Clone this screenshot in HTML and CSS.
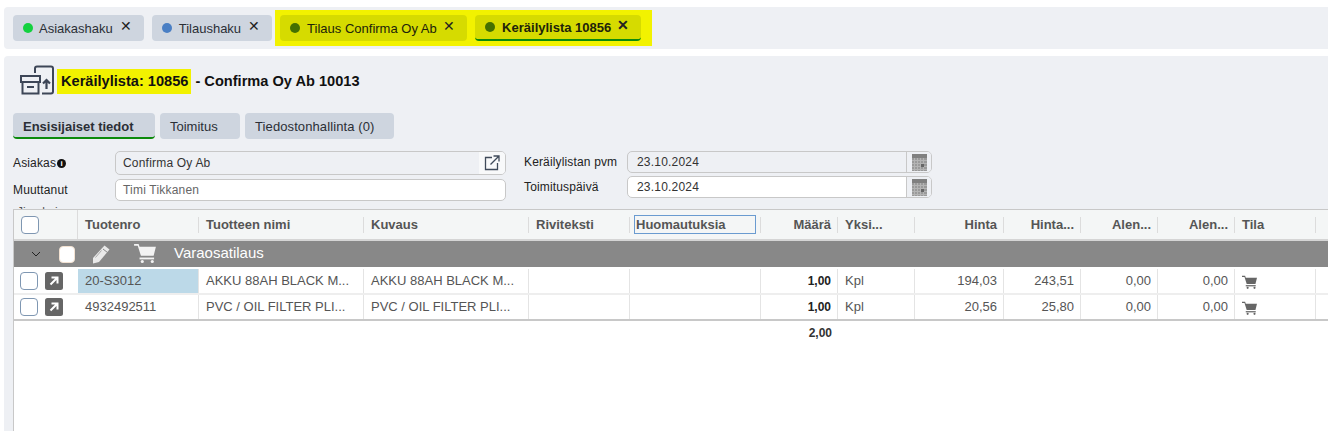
FILE: index.html
```html
<!DOCTYPE html>
<html lang="fi">
<head>
  <meta charset="UTF-8">
  <meta name="viewport" content="width=device-width, initial-scale=1">
  <title>Keräilylista 10856</title>
  <link rel="stylesheet" href="styles.css">
</head>
<body>
  <svg class="sprite" width="0" height="0">
    <symbol id="cart" viewBox="0 0 24 22">
      <path d="M0 1h5l1 3h18l-2.500 10H7.500L4 3H0z" fill="currentColor"/>
      <path d="M6 16h16v2H6z" fill="currentColor"/>
      <circle cx="9" cy="20.300" r="1.700" fill="currentColor"/>
      <circle cx="20" cy="20.300" r="1.700" fill="currentColor"/>
    </symbol>
    <symbol id="calendar" viewBox="0 0 15 17">
      <rect width="15" height="17" fill="#9a9a9a"/>
      <rect width="15" height="4" fill="#808080"/>
      <path d="M2.500 4v13M5.500 4v13M8.500 4v13M11.500 4v13M0 6.500h15M0 9.500h15M0 12.500h15M0 15.500h15" stroke="#b4b4b4" stroke-width="1"/>
      <rect x="9" y="10" width="3" height="3" fill="#666"/>
    </symbol>
    <symbol id="open" viewBox="0 0 18 18">
      <rect x="0" y="0" width="18" height="18" rx="2.500" fill="#666"/>
      <path d="M5.500 12.500l6.500-6.500M6.500 5.500h6v6" fill="none" stroke="#fff" stroke-width="2"/>
    </symbol>
  </svg>

  <div class="tabbar">
    <div class="tab"><span class="dot dot-green"></span>Asiakashaku<span class="close">✕</span></div>
    <div class="tab"><span class="dot dot-blue"></span>Tilaushaku<span class="close">✕</span></div>
    <div class="mark-tabs">
      <div class="tab tab-marked"><span class="dot dot-olive"></span><span class="tab-clip">Tilaus Confirma Oy Ab</span><span class="close">✕</span></div>
      <div class="tab tab-marked tab-active"><span class="dot dot-olive"></span>Keräilylista 10856<span class="close">✕</span></div>
    </div>
  </div>

  <div class="panel">
    <div class="page-title">
      <svg class="title-icon" width="36" height="32" viewBox="0 0 36 32" fill="none" stroke="#3d4657" stroke-width="2">
        <path d="M16 8V3.500a2 2 0 0 1 2-2h14a2 2 0 0 1 2 2v23a2 2 0 0 1-2 2H23"/>
        <path d="M2 11h19v6H2z"/>
        <path d="M3.500 17v11.500h16V17M8 22h7"/>
        <path d="M27.500 24v-9M24 18.500l3.500-3.500 3.500 3.500" stroke-width="2.200"/>
      </svg>
      <h1><mark>Keräilylista: 10856</mark> - Confirma Oy Ab 10013</h1>
    </div>

    <div class="subtabs">
      <div class="subtab subtab-active">Ensisijaiset tiedot</div>
      <div class="subtab subtab-short">Toimitus</div>
      <div class="subtab subtab-long">Tiedostonhallinta (0)</div>
    </div>

    <div class="form">
      <div class="form-col form-left">
        <label>Asiakas<span class="info">i</span></label>
        <div class="field field-ro">Confirma Oy Ab
          <span class="field-btn">
            <svg width="16" height="16" viewBox="0 0 16 16" fill="none" stroke="#3f4a5a" stroke-width="1.300">
              <path d="M8 2.500H1.500v12h12V8M6.500 9.500L14.500 1.500M9.500 1h5.500v5.500"/>
            </svg>
          </span>
        </div>
        <label>Muuttanut</label>
        <div class="field field-muted">Timi Tikkanen</div>
      </div>
      <div class="form-col form-right">
        <label>Keräilylistan pvm</label>
        <div class="field field-ro">23.10.2024
          <span class="field-btn field-btn-cal"><svg width="15" height="17"><use href="#calendar"/></svg></span>
        </div>
        <label>Toimituspäivä</label>
        <div class="field">23.10.2024
          <span class="field-btn field-btn-cal"><svg width="15" height="17"><use href="#calendar"/></svg></span>
        </div>
      </div>
    </div>
    <div class="cut-label">Jimakai</div>

    <div class="grid">
      <div class="row row-head">
        <div class="cell cell-check"><span class="check"></span></div>
        <div class="cell">Tuotenro</div>
        <div class="cell">Tuotteen nimi</div>
        <div class="cell">Kuvaus</div>
        <div class="cell">Riviteksti</div>
        <div class="cell cell-focus"><span class="head-focus">Huomautuksia</span></div>
        <div class="cell num">Määrä</div>
        <div class="cell">Yksi...</div>
        <div class="cell num">Hinta</div>
        <div class="cell num">Hinta...</div>
        <div class="cell num">Alen...</div>
        <div class="cell num">Alen...</div>
        <div class="cell">Tila</div>
        <div class="cell"></div>
      </div>

      <div class="group-row">
        <svg class="chevron" width="10" height="6" viewBox="0 0 10 6" fill="none" stroke="#222" stroke-width="1"><path d="M1 1l4 4 4-4"/></svg>
        <span class="check check-white"></span>
        <svg class="pencil" width="20" height="20" viewBox="0 0 20 20">
          <path d="M13.500 1.500l5 4L8 18l-6 1.500L2 14z" fill="#e9e9e9"/>
          <path d="M12 5l4.500 3.500" stroke="#888" stroke-width="1"/>
          <path d="M4.500 13.500l6-7" stroke="#aaa" stroke-width="1"/>
        </svg>
        <svg class="group-cart" width="22" height="20"><use href="#cart"/></svg>
        <span class="group-name">Varaosatilaus</span>
      </div>

      <div class="row row-data row-first">
        <div class="cell cell-check"><span class="check"></span><svg class="open" width="18" height="18"><use href="#open"/></svg></div>
        <div class="cell cell-selected">20-S3012</div>
        <div class="cell">AKKU 88AH BLACK M...</div>
        <div class="cell">AKKU 88AH BLACK M...</div>
        <div class="cell"></div>
        <div class="cell"></div>
        <div class="cell num qty">1,00</div>
        <div class="cell">Kpl</div>
        <div class="cell num">194,03</div>
        <div class="cell num">243,51</div>
        <div class="cell num">0,00</div>
        <div class="cell num">0,00</div>
        <div class="cell cell-cart"><svg width="15" height="14"><use href="#cart"/></svg></div>
        <div class="cell"></div>
      </div>
      <div class="row row-data row-last">
        <div class="cell cell-check"><span class="check"></span><svg class="open" width="18" height="18"><use href="#open"/></svg></div>
        <div class="cell">4932492511</div>
        <div class="cell">PVC / OIL FILTER PLI...</div>
        <div class="cell">PVC / OIL FILTER PLI...</div>
        <div class="cell"></div>
        <div class="cell"></div>
        <div class="cell num qty">1,00</div>
        <div class="cell">Kpl</div>
        <div class="cell num">20,56</div>
        <div class="cell num">25,80</div>
        <div class="cell num">0,00</div>
        <div class="cell num">0,00</div>
        <div class="cell cell-cart"><svg width="15" height="14"><use href="#cart"/></svg></div>
        <div class="cell"></div>
      </div>
      <div class="row row-total">
        <div class="cell"></div><div class="cell"></div><div class="cell"></div><div class="cell"></div><div class="cell"></div><div class="cell"></div>
        <div class="cell num qty">2,00</div>
      </div>
    </div>
  </div>
</body>
</html>
```

FILE: styles.css
```css
html, body {
  height: 431px;
  overflow: hidden;
}
body {
  margin: 0;
  background: #fff;
  color: #333;
  font-family: 'Liberation Sans', Arial, sans-serif;
  font-size: 12px;
}
.sprite {
  display: block;
  height: 0;
}
.tabbar {
  display: flex;
  align-items: center;
  gap: 8px;
  height: 42px;
  margin: 7px 0 7px 4px;
  padding-left: 9px;
  background: #eef0f4;
  border-radius: 4px 0 0 4px;
}
.tab {
  display: flex;
  align-items: center;
  box-sizing: border-box;
  height: 26px;
  padding: 0 12px 0 10px;
  background: #ced5df;
  border-radius: 4px;
  color: #2b2f36;
  font-size: 13px;
}
.tab-clip {
  width: 130px;
  white-space: nowrap;
  overflow: hidden;
}
.dot {
  flex: none;
  width: 10px;
  height: 10px;
  margin-right: 6px;
  border-radius: 50%;
}
.dot-green { background: #13d13f; }
.dot-blue { background: #4a7fc4; margin-right: 7px; }
.dot-olive { background: #437000; margin-right: 7px; }
.close {
  margin-left: 7px;
  font-size: 14px;
  color: #222;
  position: relative;
  top: -2px;
}
.mark-tabs {
  display: flex;
  align-items: center;
  gap: 8px;
  height: 36px;
  margin-left: -5px;
  padding: 0 11px 0 5px;
  background: #f2f200;
}
.tab-marked {
  background: #d6db00;
  color: #20230a;
}
.tab-marked .close {
  margin-left: 6px;
}
.tab-active {
  font-weight: 700;
  border-bottom: 2px solid #0c8a0c;
}
.panel {
  height: 375px;
  margin-left: 4px;
  padding-left: 9px;
  background: #eef0f4;
  border-radius: 4px 0 0 0;
}
.page-title {
  display: flex;
  align-items: center;
  height: 50px;
  padding-left: 6px;
}
.title-icon {
  flex: none;
}
h1 {
  margin: 0 0 0 2px;
  font-size: 14.6px;
  font-weight: 700;
  color: #111;
}
mark {
  display: inline-block;
  padding: 4px 3px 5px 4px;
  background: #f2f200;
  color: #111;
}
.subtabs {
  display: flex;
  gap: 5px;
  margin-top: 7px;
}
.subtab {
  display: flex;
  align-items: center;
  box-sizing: border-box;
  height: 26px;
  padding: 0 10px;
  background: #ced5df;
  border-radius: 4px;
  color: #2b2f36;
  font-size: 13px;
}
.subtab-short {
  width: 80px;
}
.subtab-long {
  width: 149px;
  letter-spacing: 0.1px;
}
.subtab-active {
  width: 142px;
  padding-top: 2px;
  font-weight: 700;
  border-bottom: 2px solid #0c8a0c;
}
.form {
  display: flex;
  height: 50px;
  margin-top: 12px;
}
.form-col {
  display: grid;
  align-items: center;
}
.form-left {
  grid-template-columns: 102px 391px;
  grid-template-rows: 24px 22px;
  row-gap: 4px;
  width: 511px;
}
.form-right {
  grid-template-columns: 103px 305px;
  grid-template-rows: 22px 22px;
  row-gap: 3px;
}
label {
  color: #222;
  letter-spacing: 0.15px;
}
.info {
  display: inline-block;
  width: 9px;
  height: 9px;
  margin-left: 1px;
  border-radius: 50%;
  background: #111;
  color: #fff;
  font-size: 8px;
  line-height: 9px;
  font-weight: 700;
  text-align: center;
  vertical-align: 1px;
}
.field {
  display: flex;
  align-items: center;
  box-sizing: border-box;
  height: 100%;
  padding-left: 7px;
  background: #fff;
  border: 1px solid #c8c8c8;
  border-radius: 5px;
  color: #333;
  letter-spacing: 0.2px;
  overflow: hidden;
}
.form-right .field {
  padding-left: 9px;
}
.field-ro {
  background: #eef0f4;
}
.field-muted {
  color: #666;
}
.field-btn {
  display: flex;
  align-items: center;
  justify-content: center;
  width: 26px;
  height: 100%;
  margin-left: auto;
  background: #f8f9fa;
}
.field-btn-cal {
  width: 24px;
  background: #eef0f4;
  border-left: 1px solid #c8c8c8;
}
.cut-label {
  height: 4px;
  margin: 4px 0 0 4px;
  overflow: hidden;
  color: #555;
  line-height: 14px;
}
.grid {
  box-sizing: border-box;
  height: 222px;
  background: #fff;
  border-left: 1px solid #c8c8c8;
  border-top: 1px solid #c8c8c8;
}
.row {
  display: grid;
  grid-template-columns: 64px 121px 165px 165px 101px 131px 77px 77px 89px 77px 77px 77px 81px 1fr;
}
.row-head {
  height: 29px;
  align-items: center;
  background: #f4f6f6;
  border-bottom: 2px solid #d5d5d5;
  font-size: 13px;
  font-weight: 700;
  color: #555;
}
.row-head .cell {
  height: 16px;
  padding: 0 6px 0 7px;
  line-height: 16px;
  border-right: 1px solid #dcdcdc;
  white-space: nowrap;
}
.row-head .cell-check {
  display: flex;
  align-items: center;
  height: 29px;
  padding: 0 0 0 7px;
}
.row-head .cell-focus {
  padding-left: 4px;
}
.head-focus {
  display: block;
  box-sizing: border-box;
  width: 122px;
  height: 19px;
  padding-left: 1px;
  margin-top: -2px;
  border: 1px solid #6a9bd0;
  line-height: 17px;
}
.num {
  text-align: right;
}
.check {
  display: inline-block;
  box-sizing: border-box;
  width: 18px;
  height: 18px;
  background: #fff;
  border: 1px solid #7f97b2;
  border-radius: 4px;
}
.check-white {
  height: 17px;
  width: 16px;
  border-color: #f3e2d2;
}
.group-row {
  display: flex;
  align-items: center;
  height: 26px;
  padding-left: 17px;
  background: #888;
  color: #fff;
  font-size: 15px;
  line-height: 24px;
}
.chevron { margin-right: 18px; }
.pencil { margin-left: 16px; }
.group-cart {
  margin: -2px 0 0 23px;
  color: #f3f3f3;
}
.group-name { margin: -2px 0 0 18px; }
.row-data {
  height: 24px;
  line-height: 24px;
  color: #555;
  font-size: 13px;
  border-bottom: 2px solid #eee;
}
.row-first {
  margin-top: 2px;
}
.row-data .cell {
  padding: 0 6px 0 7px;
  border-right: 1px solid #e4e4e4;
  white-space: nowrap;
  overflow: hidden;
}
.row-data .cell-check {
  display: flex;
  align-items: center;
  gap: 7px;
  padding: 0 0 0 6px;
  border-right: none;
}
.row-data .cell-selected {
  background: #bcd9e8;
}
.row-last {
  border-bottom: 2px solid #c8c8c8;
}
.open { flex: none; }
.qty {
  font-weight: 700;
  font-size: 12px;
  color: #333;
}
.row-data .qty {
  color: #222;
}
.row-data .cell-cart {
  color: #666;
  line-height: 0;
  padding-top: 6px;
}
.row-total {
  height: 24px;
  line-height: 24px;
}
.row-total .cell {
  padding: 0 6px;
}
```
